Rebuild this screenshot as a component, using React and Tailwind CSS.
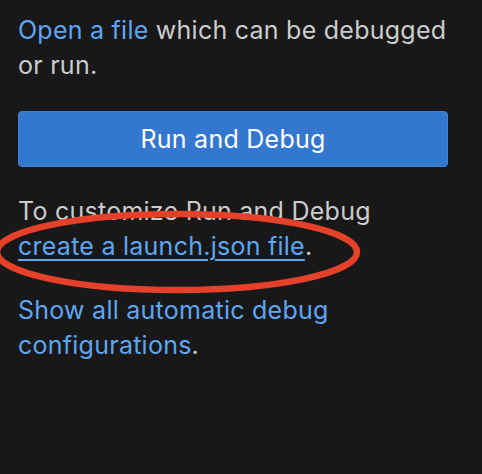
import React from "react";

function App() {
  return (
    <div
      className="relative min-h-screen w-[482px] h-[474px] overflow-hidden bg-[#181818] text-[#cccccc] text-[25px] leading-[35px] tracking-[0.25px] pl-[18px] pr-[34px] pt-[13px]"
      style={{ fontFamily: "Inter, 'Noto Sans', sans-serif" }}
    >
      {/* Intro */}
      <p>
        <a className="text-[#5ea6f3]">Open a file</a> which can be debugged
        <br />
        or run.
      </p>

      <button className="mt-[28px] w-full h-[56px] rounded-[4px] bg-[#3477cf] border border-[#4083d8] text-white">
        Run and Debug
      </button>

      <p className="mt-[27px]">
        To customize Run and Debug
        <br />
        <a className="text-[#5ea6f3] underline underline-offset-[4px] decoration-[1.5px]">
          create a launch.json file
        </a>
        .
      </p>

      <p className="mt-[29px]">
        <a className="text-[#5ea6f3]">Show all automatic debug</a>
        <br />
        <a className="text-[#5ea6f3]">configurations</a>.
      </p>

      {/* red annotation */}
      <svg className="absolute left-0 top-0 pointer-events-none" width="482" height="474">
        <ellipse
          cx="177"
          cy="252"
          rx="180"
          ry="38"
          fill="none"
          stroke="#e5402a"
          strokeWidth="6.5"
        />
      </svg>
    </div>
  );
}

export default App;
